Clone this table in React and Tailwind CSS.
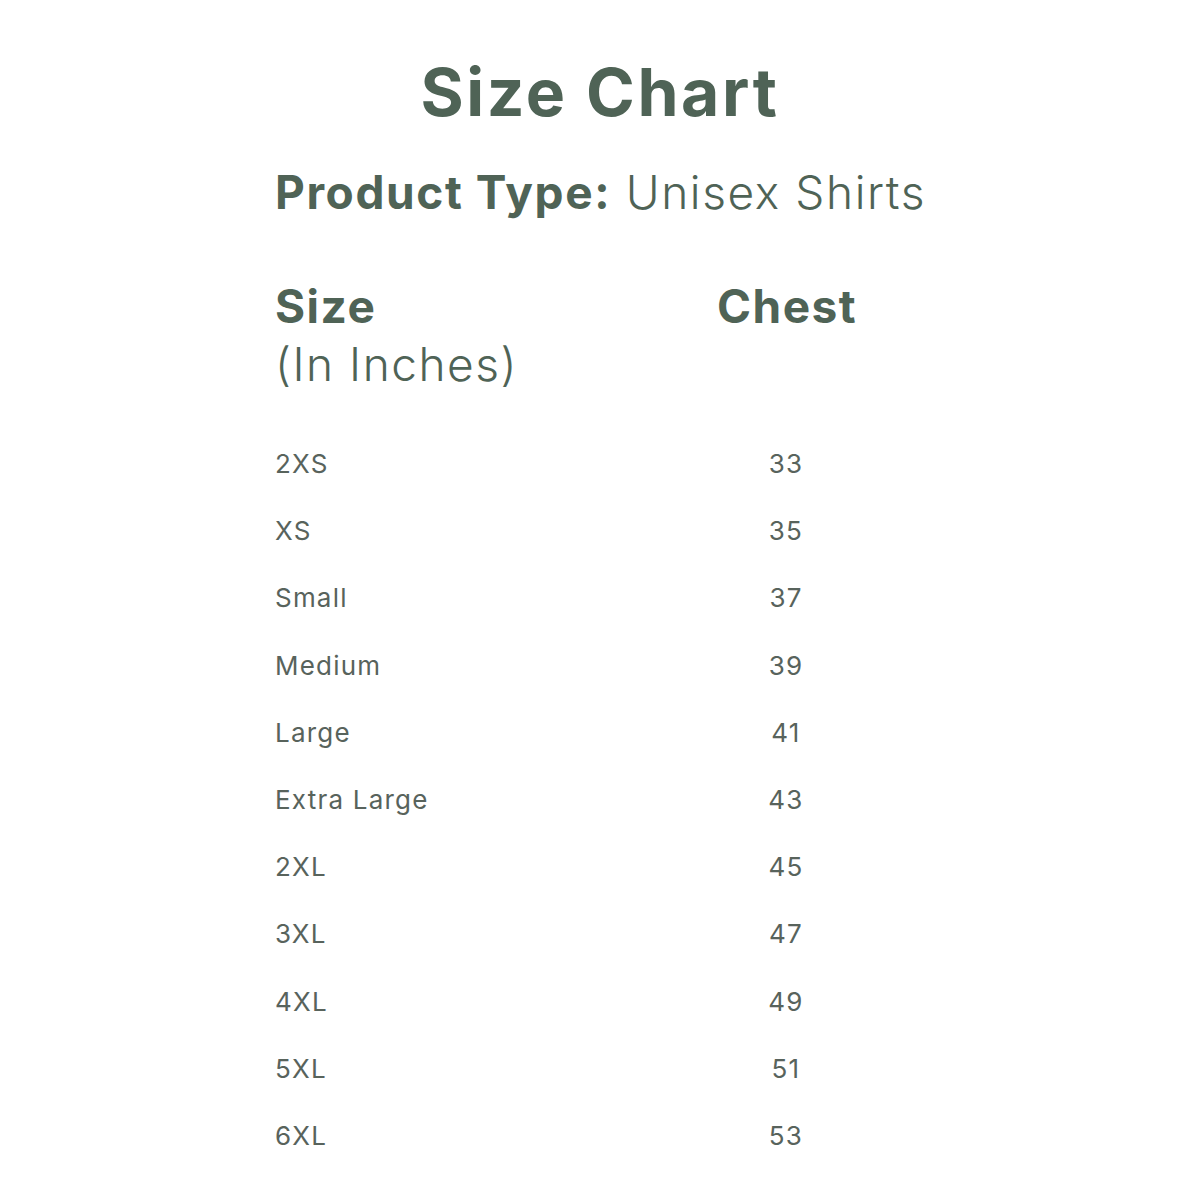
const rows = [
  ['2XS', '33'],
  ['XS', '35'],
  ['Small', '37'],
  ['Medium', '39'],
  ['Large', '41'],
  ['Extra Large', '43'],
  ['2XL', '45'],
  ['3XL', '47'],
  ['4XL', '49'],
  ['5XL', '51'],
  ['6XL', '53'],
];

export default function App() {
  return (
    <div className="min-h-[1200px] w-[1200px] bg-white text-[#4f6356] font-['Inter',sans-serif]">
      <div className="w-[650px] mx-auto pt-[52px]">
        <h1 className="text-center text-[66px] leading-[80px] font-bold tracking-[2.6px]">Size Chart</h1>
        <p className="mt-[30px] text-[46px] leading-[60px] whitespace-nowrap tracking-[1.6px]">
          <span className="font-bold">Product Type:</span>{' '}
          <span className="font-light">Unisex Shirts</span>
        </p>
        <div className="mt-[55px] grid grid-cols-[442px_138px] tracking-[1.5px]">
          <div>
            <div className="text-[46px] leading-[58px] font-bold">Size</div>
            <div className="text-[46px] leading-[58px] font-light">(In Inches)</div>
          </div>
          <div className="text-center text-[46px] leading-[58px] font-bold">Chest</div>
        </div>
        <div className="mt-[37px]">
          {rows.map(([size, chest]) => (
            <div key={size} className="grid grid-cols-[442px_138px] h-[67.2px] items-center text-[26px] tracking-[1.2px] text-[#58635c]">
              <div>{size}</div>
              <div className="text-center">{chest}</div>
            </div>
          ))}
        </div>
      </div>
    </div>
  );
}
